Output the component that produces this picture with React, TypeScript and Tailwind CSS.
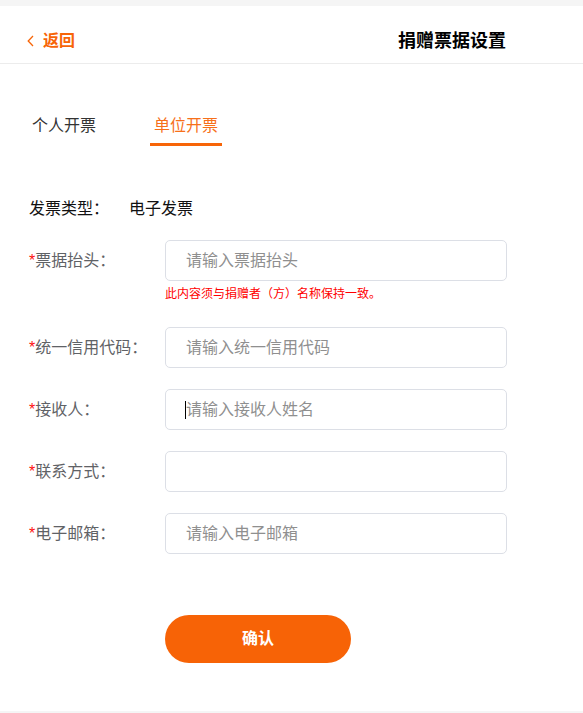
import React from "react";

const fields = [
  { label: "票据抬头：", placeholder: "请输入票据抬头", hint: "此内容须与捐赠者（方）名称保持一致。" },
  { label: "统一信用代码：", placeholder: "请输入统一信用代码" },
  { label: "接收人：", placeholder: "请输入接收人姓名", caret: true },
  { label: "联系方式：", placeholder: "" },
  { label: "电子邮箱：", placeholder: "请输入电子邮箱" },
];

export default function App() {
  return (
    <div className="min-h-screen bg-[#f5f5f5] pt-[6px] font-['Liberation_Sans','Noto_Sans_CJK_SC',sans-serif]">
      <div className="bg-white pb-[48px]">
        {/* Header */}
        <div className="h-[58px] pt-[12px] border-b border-[#ececec] flex items-center justify-between pl-[27px] pr-[77px]">
          <div className="flex items-center gap-[9px] text-[#f76508]">
            <svg width="7" height="12" viewBox="0 0 7 12" fill="none">
              <path d="M6 1L1.2 6L6 11" stroke="#f76508" strokeWidth="1.3" />
            </svg>
            <span className="text-base font-bold leading-6">返回</span>
          </div>
          <div className="text-[18px] font-bold text-black leading-6">捐赠票据设置</div>
        </div>

        {/* Tabs */}
        <div className="flex gap-[50px] pl-[28px] mt-[50px]">
          <div className="px-1 leading-6 text-base text-[#333] pb-[5px] border-b-[3px] border-transparent">
            个人开票
          </div>
          <div className="px-1 leading-6 text-base text-[#f7701a] pb-[5px] border-b-[3px] border-[#f76508]">
            单位开票
          </div>
        </div>

        {/* Invoice type */}
        <div className="flex mt-[51px] pl-[29px] text-base leading-6 text-[#111]">
          <span className="w-[100px]">发票类型：</span>
          <span>电子发票</span>
        </div>

        {/* Form */}
        <div className="flex flex-col gap-[21px] mt-[19px] pl-[29px]">
          {fields.map((f, i) => (
            <div key={i} className={`flex ${i === 1 ? "mt-[4px]" : ""}`}>
              <div className="w-[136px] h-[41px] flex items-center text-base text-[#5f6266]">
                <span className="text-[#ff1010] font-['Liberation_Sans',sans-serif]">*</span>
                <span>{f.label}</span>
              </div>
              <div className="flex flex-col">
                <div className="relative">
                  <input
                    className="w-[342px] h-[41px] rounded-[5px] border border-[#dcdfe6] px-[20px] text-base text-[#333] placeholder:text-[#8f8f8f] outline-none bg-white"
                    placeholder={f.placeholder}
                  />
                  {f.caret && (
                    <span className="absolute left-[20px] top-[12px] w-px h-[18px] bg-black" />
                  )}
                </div>
                {f.hint && (
                  <div className="mt-[5px] text-xs leading-4 text-[#ff0000]">{f.hint}</div>
                )}
              </div>
            </div>
          ))}
        </div>

        {/* Submit */}
        <div className="mt-[61px] pl-[165px]">
          <button className="w-[186px] h-[48px] rounded-full bg-[#f76306] text-white text-base font-bold">
            确认
          </button>
        </div>
      </div>
    </div>
  );
}
